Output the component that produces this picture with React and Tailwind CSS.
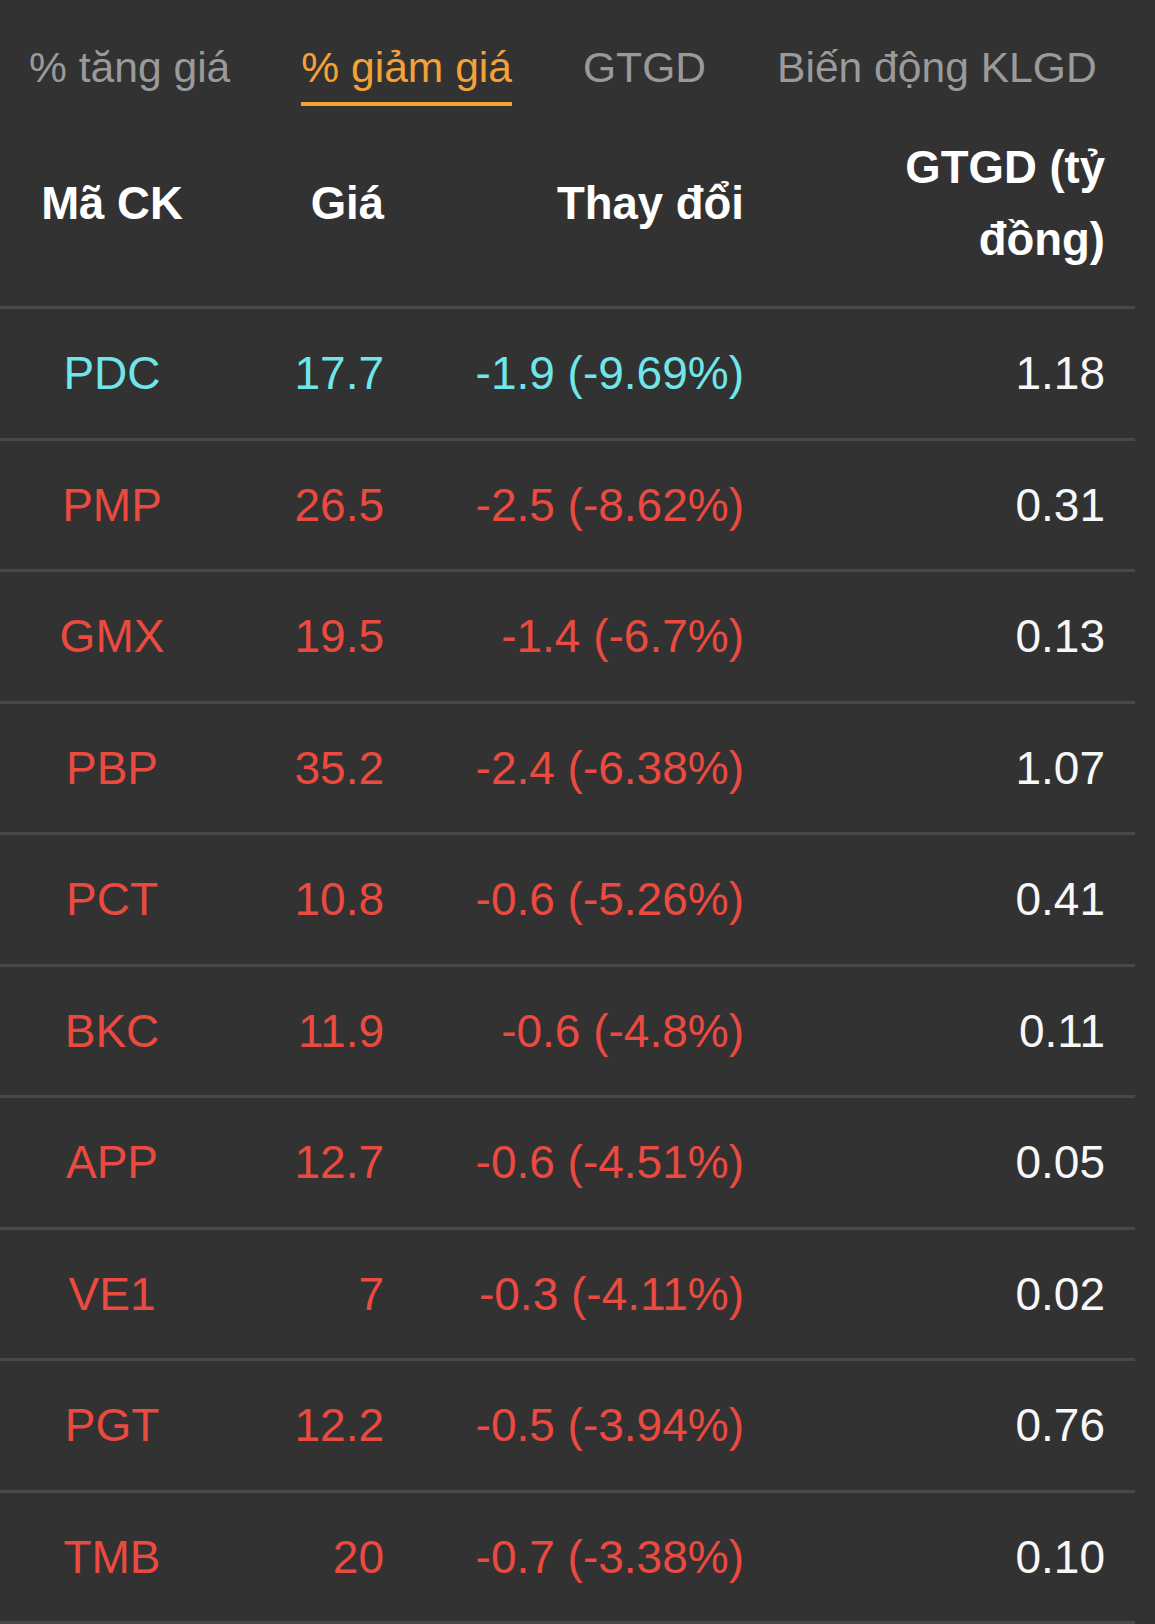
import React, { useState } from 'react';

const tabs = ['% tăng giá', '% giảm giá', 'GTGD', 'Biến động KLGD'];

const rows = [
  { code: 'PDC', price: '17.7', change: '-1.9 (-9.69%)', value: '1.18', floor: true },
  { code: 'PMP', price: '26.5', change: '-2.5 (-8.62%)', value: '0.31' },
  { code: 'GMX', price: '19.5', change: '-1.4 (-6.7%)', value: '0.13' },
  { code: 'PBP', price: '35.2', change: '-2.4 (-6.38%)', value: '1.07' },
  { code: 'PCT', price: '10.8', change: '-0.6 (-5.26%)', value: '0.41' },
  { code: 'BKC', price: '11.9', change: '-0.6 (-4.8%)', value: '0.11' },
  { code: 'APP', price: '12.7', change: '-0.6 (-4.51%)', value: '0.05' },
  { code: 'VE1', price: '7', change: '-0.3 (-4.11%)', value: '0.02' },
  { code: 'PGT', price: '12.2', change: '-0.5 (-3.94%)', value: '0.76' },
  { code: 'TMB', price: '20', change: '-0.7 (-3.38%)', value: '0.10' },
];

const App = () => {
  const [active, setActive] = useState(1);

  return (
    <div className="min-h-[1624px] w-full bg-[#323232] font-['Liberation_Sans','Helvetica_Neue',Arial,sans-serif]">
      {/* tabs */}
      <div className="flex gap-[71px] pl-[29px] pt-[42px]">
        {tabs.map((tab, i) => (
          <button
            key={tab}
            onClick={() => setActive(i)}
            className={`pb-[10px] text-[42.6px] leading-[50px] whitespace-nowrap border-b-4 ${
              active === i ? 'text-[#f4a236] border-[#f4a236]' : 'text-[#9a9a9a] border-transparent'
            }`}
          >
            {tab}
          </button>
        ))}
      </div>

      <div className="w-[1135px]">
        {/* header */}
        <div className="grid grid-cols-[224px_190px_360px_361px] items-center pt-[26px] pb-[30px] border-b-[3px] border-[#494949] text-[45.5px] font-bold leading-[72px] text-white">
          <div className="text-center">Mã CK</div>
          <div className="text-right pr-[30px]">Giá</div>
          <div className="text-right pr-[30px]">Thay đổi</div>
          <div className="text-right pr-[30px]">
            GTGD (tỷ
            <br />
            đồng)
          </div>
        </div>

        {/* rows */}
        {rows.map((row) => {
          const color = row.floor ? 'text-[#6fe7ea]' : 'text-[#ea4a3f]';
          return (
            <div
              key={row.code}
              className="grid grid-cols-[224px_190px_360px_361px] items-center h-[131.5px] border-b-[3px] border-[#494949] text-[46px] leading-none"
            >
              <div className={`text-center ${color}`}>{row.code}</div>
              <div className={`text-right pr-[30px] ${color}`}>{row.price}</div>
              <div className={`text-right pr-[30px] ${color}`}>{row.change}</div>
              <div className="text-right pr-[30px] text-[#f7f7f7]">{row.value}</div>
            </div>
          );
        })}
      </div>
    </div>
  );
};

export default App;
